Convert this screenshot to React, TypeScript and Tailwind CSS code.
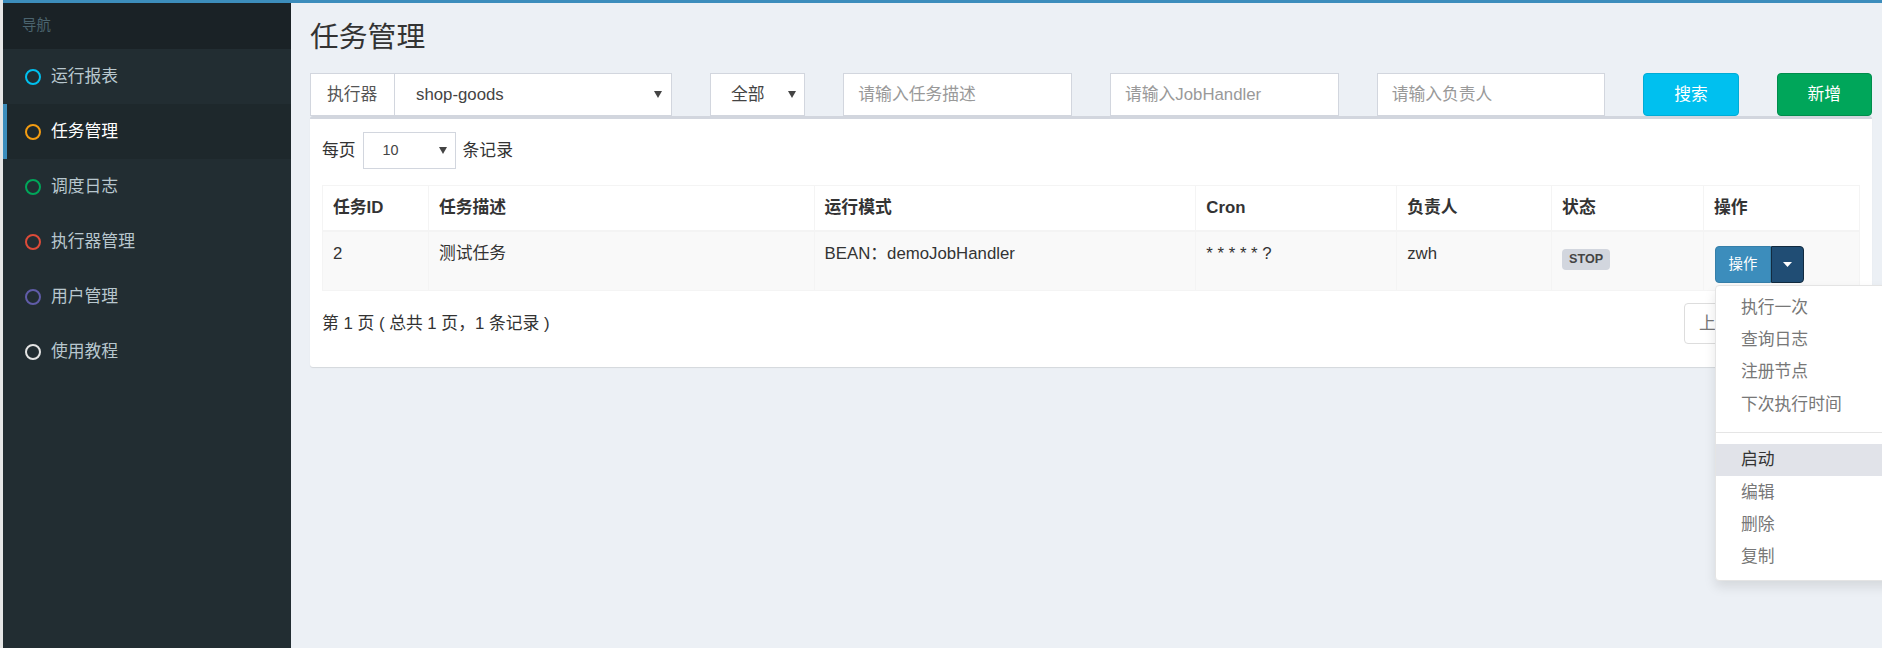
import React from 'react';

const navItems = [
  { label: '运行报表', ring: 'border-[#00c0ef]' },
  { label: '任务管理', ring: 'border-[#f39c12]', active: true },
  { label: '调度日志', ring: 'border-[#00a65a]' },
  { label: '执行器管理', ring: 'border-[#dd4b39]' },
  { label: '用户管理', ring: 'border-[#605ca8]' },
  { label: '使用教程', ring: 'border-[#e4e4e4]' },
];

const menuTop = ['执行一次', '查询日志', '注册节点', '下次执行时间'];
const menuBottom = ['启动', '编辑', '删除', '复制'];

const Caret = ({ color = '#444', w = 8, h = 7 }: { color?: string; w?: number; h?: number }) => (
  <svg width={w} height={h} viewBox={`0 0 ${w} ${h}`}>
    <polygon points={`0,0 ${w},0 ${w / 2},${h}`} fill={color} />
  </svg>
);

const Sidebar = () => (
  <aside className="w-[288px] shrink-0 bg-[#222d32] flex flex-col">
    <div className="h-[46px] bg-[#1a2226] flex items-center pl-[19px] text-[14.4px] text-[#4b646f]">导航</div>
    {navItems.map((item) => (
      <div
        key={item.label}
        className={`h-[55px] flex items-center gap-[10px] pl-[18px] border-l-4 text-[16.8px] ${
          item.active ? 'bg-[#1e282c] border-[#3c8dbc] text-white' : 'border-transparent text-[#b8c7ce]'
        }`}
      >
        <span className={`w-[16px] h-[16px] rounded-full border-[2.5px] ${item.ring}`}></span>
        <span>{item.label}</span>
      </div>
    ))}
  </aside>
);

const FilterBar = () => (
  <div className="grid grid-cols-[3fr_1fr_2fr_2fr_2fr_1fr_1fr] w-[1600px] h-[43px] text-[16.8px]">
    <div className="px-[19px] flex">
      <div className="w-[84px] bg-white border border-[#d2d6de] border-r-0 flex items-center pl-[16px] text-[#555]">执行器</div>
      <div className="flex-1 bg-white border border-[#d2d6de] flex items-center justify-between pl-[21px] pr-[9px] text-[#444]">
        <span>shop-goods</span>
        <Caret />
      </div>
    </div>
    <div className="px-[19px] flex">
      <div className="flex-1 bg-white border border-[#d2d6de] flex items-center justify-between pl-[20px] pr-[8px] text-[#444]">
        <span>全部</span>
        <Caret />
      </div>
    </div>
    {['请输入任务描述', '请输入JobHandler', '请输入负责人'].map((p) => (
      <div key={p} className="px-[19px] flex">
        <div className="flex-1 bg-white border border-[#d2d6de] flex items-center pl-[14px] text-[#999]">{p}</div>
      </div>
    ))}
    <div className="px-[19px] flex">
      <div className="flex-1 rounded-[4px] bg-[#00c0ef] border border-[#00acd6] flex items-center justify-center text-white">搜索</div>
    </div>
    <div className="px-[19px] flex">
      <div className="flex-1 rounded-[4px] bg-[#00a65a] border border-[#008d4c] flex items-center justify-center text-white">新增</div>
    </div>
  </div>
);

const ActionMenu = () => (
  <div className="relative inline-block mt-[4px] ml-[1px]">
    <div className="flex h-[37px] text-[14.4px] text-white">
      <div className="w-[56px] bg-[#3c8dbc] border border-[#367fa9] rounded-l-[4px] flex items-center justify-center">操作</div>
      <div className="w-[33px] bg-[#204d74] border border-[#122b40] rounded-r-[4px] flex items-center justify-center">
        <Caret color="#ffffff" w={9} h={5} />
      </div>
    </div>
    <div className="absolute left-0 top-[39px] z-10 w-[200px] bg-white border border-[#e4e4e4] rounded-[4px] shadow-[0_6px_12px_rgba(0,0,0,0.1)] py-[6px] text-[16.8px] text-[#777]">
      {menuTop.map((m) => (
        <div key={m} className="h-[32.4px] flex items-center pl-[25px]">{m}</div>
      ))}
      <div className="my-[11px] h-px bg-[#e5e5e5]"></div>
      {menuBottom.map((m, i) => (
        <div
          key={m}
          className={`h-[32.4px] flex items-center pl-[25px] ${i === 0 ? 'bg-[#e1e3e9] text-[#333]' : ''}`}
        >
          {m}
        </div>
      ))}
    </div>
  </div>
);

const JobTable = () => {
  const th = 'border border-[#f4f4f4] border-b-2 px-[10px] text-left font-bold h-[45px]';
  const td = 'border border-[#f4f4f4] px-[10px] pt-[10px] align-top h-[60px]';
  return (
    <table className="w-full border-collapse text-[16.8px] text-[#333] leading-[24px]">
      <colgroup>
        <col className="w-[106px]" />
        <col className="w-[386px]" />
        <col className="w-[382px]" />
        <col className="w-[201px]" />
        <col className="w-[155px]" />
        <col className="w-[152px]" />
        <col className="w-[156px]" />
      </colgroup>
      <thead>
        <tr>
          <th className={th}>任务ID</th>
          <th className={th}>任务描述</th>
          <th className={th}>运行模式</th>
          <th className={th}>Cron</th>
          <th className={th}>负责人</th>
          <th className={th}>状态</th>
          <th className={th}>操作</th>
        </tr>
      </thead>
      <tbody>
        <tr className="bg-[#f9f9f9]">
          <td className={td}>2</td>
          <td className={td}>测试任务</td>
          <td className={td}>BEAN：demoJobHandler</td>
          <td className={td}>* * * * * ?</td>
          <td className={td}>zwh</td>
          <td className={td}>
            <span className="inline-block mt-[7px] px-[7px] rounded-[4px] bg-[#d2d6de] text-[#444] text-[12.6px] font-bold leading-[21px]">STOP</span>
          </td>
          <td className={td}>
            <ActionMenu />
          </td>
        </tr>
      </tbody>
    </table>
  );
};

export default function App() {
  return (
    <div className="flex w-[1882px] h-[648px] overflow-hidden bg-[#ecf0f5] font-['Liberation_Sans','Noto_Sans_CJK_SC',sans-serif]">
      <div className="w-[3px] shrink-0 bg-[#e6e6e6]"></div>
      <div className="flex-1 flex flex-col min-w-0">
        <div className="h-[3px] bg-[#3c8dbc]"></div>
        <div className="flex-1 flex min-h-0">
          <Sidebar />
          <main className="flex-1 min-w-0 overflow-hidden">
            <h1 className="pt-[18px] pl-[19px] text-[28.8px] leading-[32px] text-[#333]">任务管理</h1>
            <div className="pt-[20px]">
              <FilterBar />
              <div className="w-[1600px] px-[19px]">
                <div className="bg-white border-t-[3px] border-[#d2d6de] rounded-[3px] shadow-[0_1px_1px_rgba(0,0,0,0.1)] px-[12px] pt-[13px] pb-[23px]">
                  <div className="flex items-center gap-[7px] text-[16.8px] text-[#333]">
                    <span>每页</span>
                    <div className="w-[93px] h-[37px] border border-[#d2d6de] flex items-center justify-between pl-[19px] pr-[8px] text-[14.4px] text-[#444]">
                      <span>10</span>
                      <Caret />
                    </div>
                    <span>条记录</span>
                  </div>
                  <div className="mt-[16px]">
                    <JobTable />
                  </div>
                  <div className="pt-[12px] flex items-center justify-between h-[53px] text-[16.8px] text-[#333]">
                    <span>第 1 页 ( 总共 1 页，1 条记录 )</span>
                    <div className="flex h-[41px] text-[#777]">
                      <div className="w-[62px] border border-[#ddd] rounded-l-[4px] flex items-center pl-[14px]">上页</div>
                      <div className="w-[44px] border border-l-0 border-[#ddd] flex items-center justify-center">1</div>
                      <div className="w-[70px] border border-l-0 border-[#ddd] rounded-r-[4px] flex items-center justify-center">下页</div>
                    </div>
                  </div>
                </div>
              </div>
            </div>
          </main>
        </div>
      </div>
    </div>
  );
}
